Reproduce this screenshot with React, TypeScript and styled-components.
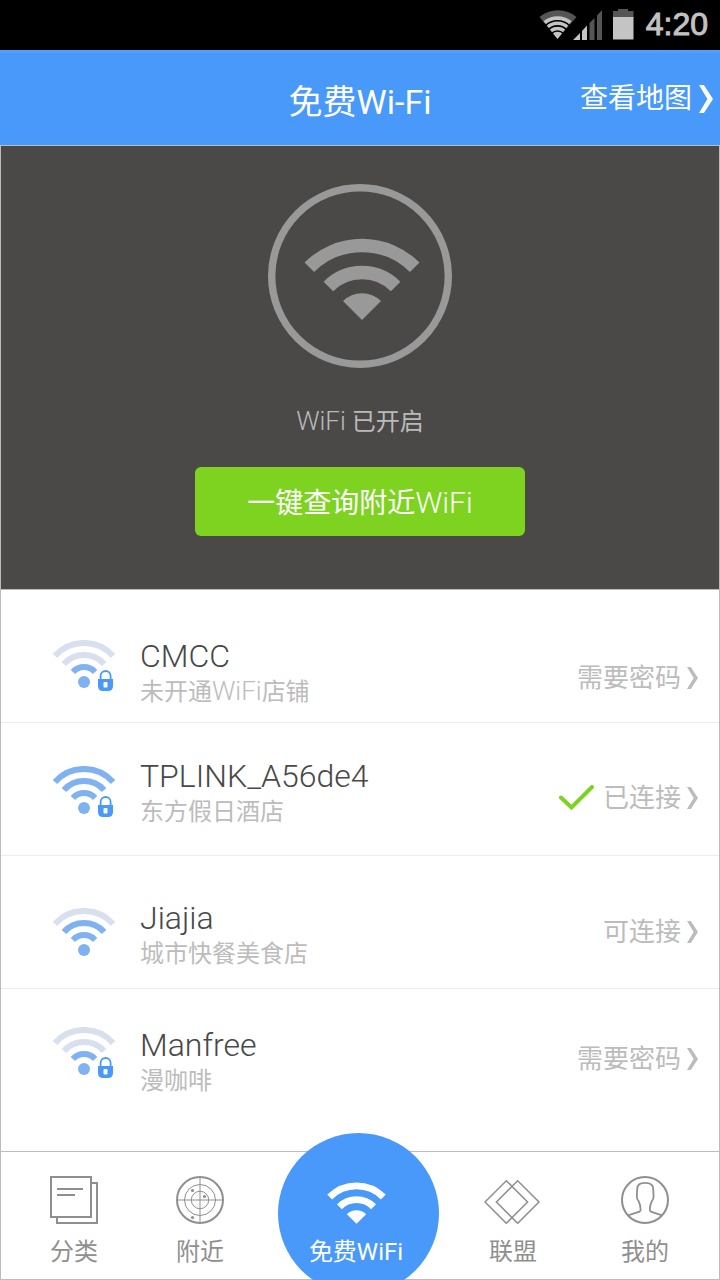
import React from 'react';
import styled, { createGlobalStyle } from 'styled-components';

const Global = createGlobalStyle`
  *, *::before, *::after { box-sizing: border-box; }
  body {
    margin: 0;
    background: #fff;
    font-family: Roboto, "Noto Sans CJK SC", sans-serif;
    font-weight: 400;
  }
  a { color: inherit; text-decoration: none; }
  h1, h2, p, ul { margin: 0; padding: 0; font-weight: inherit; }
  svg { display: block; flex: none; }
`;

const blue = '#4899f9';
const line = '#bcbcbc';

const Page = styled.div`
  display: flex;
  flex-direction: column;
  min-height: 100vh;
`;

const StatusBar = styled.div`
  display: flex;
  align-items: center;
  justify-content: flex-end;
  height: 50px;
  padding: 0 12px 2px 0;
  background: #000;
`;

const Clock = styled.time`
  margin-left: 12px;
  color: #c2c2c2;
  font: 400 32px/46px "Liberation Sans", sans-serif;
  -webkit-text-stroke: 1px #c2c2c2;
`;

const Header = styled.header`
  display: grid;
  grid-template-columns: 1fr auto 1fr;
  align-items: center;
  height: 95px;
  padding: 0 7px;
  border-top: 3px solid #559ffa;
  background: ${blue};
  color: #fff;
`;

const Title = styled.h1`
  grid-column: 2;
  padding-top: 6px;
  font-size: 34px;
  line-height: 48px;
`;

const MapLink = styled.a`
  display: flex;
  align-items: center;
  justify-self: end;
  gap: 7px;
  font-size: 28px;
  line-height: 40px;
`;

const Body = styled.main`
  display: flex;
  flex: 1;
  flex-direction: column;
  border: 1px solid ${line};
`;

const Hero = styled.section`
  display: flex;
  flex-direction: column;
  align-items: center;
  padding: 38px 0 53px;
  border-bottom: 1px solid ${line};
  background: #4a4947;
`;

const HeroState = styled.p`
  margin: 38px 0 28px;
  color: #bababa;
  font-size: 24px;
  line-height: 33px;
`;

const Latin = styled.span<{ $size: number }>`
  font-weight: 300;
  font-size: ${(p) => p.$size}px;
  line-height: 1;
`;

const ScanButton = styled.button`
  width: 330px;
  height: 69px;
  padding: 4px 0 0;
  border: 0;
  border-radius: 6px;
  background: #7ed321;
  color: #fff;
  font: inherit;
  font-size: 28px;
  line-height: 40px;
`;

const List = styled.ul`
  flex: 1;
  list-style: none;
`;

const Row = styled.li<{ $top: number }>`
  height: 133px;
  border-bottom: 1px solid #ececec;
  & > a {
    display: flex;
    align-items: flex-start;
    padding: ${(p) => p.$top}px 21px 0 51px;
  }
  &:last-child {
    height: 161px;
    border-bottom: 0;
  }
`;

const Signal = styled.div<{ $drop: number }>`
  padding-top: ${(p) => p.$drop}px;
`;

const Names = styled.div`
  flex: 1;
  min-width: 0;
  margin-left: 24px;
`;

const Ssid = styled.h2`
  color: #484848;
  font-weight: 300;
  font-size: 32px;
  line-height: 36px;
`;

const Place = styled.p`
  color: #bcbcbc;
  font-size: 24px;
  line-height: 36px;
`;

const State = styled.div<{ $drop: number }>`
  display: flex;
  align-items: center;
  gap: 6px;
  padding-top: ${(p) => p.$drop}px;
  color: #bcbcbc;
  font-size: 26px;
  line-height: 28px;
`;

const Tabs = styled.nav`
  display: grid;
  grid-template-columns: 126fr 126fr 190fr 120fr 144fr;
  height: 128px;
  padding: 0 2px 0 10px;
  border-top: 1px solid ${line};
`;

const Tab = styled.a`
  display: flex;
  flex-direction: column;
  align-items: center;
  gap: 12px;
  padding-top: 24px;
  color: #8f8f8f;
  font-size: 24px;
  line-height: 32px;
`;

const MainTab = styled(Tab)`
  position: relative;
  isolation: isolate;
  justify-self: center;
  width: 161px;
  height: 147px;
  margin-top: -19px;
  padding: 49px 4px 0 0;
  overflow: hidden;
  color: #fff;
  &::before {
    content: "";
    position: absolute;
    top: 0;
    left: 0;
    z-index: -1;
    width: 161px;
    height: 161px;
    border-radius: 50%;
    background: ${blue};
  }
`;

const Chevron = ({ w, h }: { w: number; h: number }) => (
  <svg width={w} height={h} viewBox="0 0 12 24" preserveAspectRatio="none" fill="currentColor" aria-hidden="true">
    <path d="M0 0H4.2L12 12L4.2 24H0L7.2 12Z" />
  </svg>
);

const WifiFan = ({ width, height }: { width: number; height: number }) => (
  <svg width={width} height={height} viewBox="-58 -82 116 82" aria-hidden="true">
    <g fill="none" stroke="currentColor" strokeWidth="13.5">
      <path d="M-52.7 -52.7A74.5 74.5 0 0 1 52.7 -52.7" />
      <path d="M-33.6 -33.6A47.5 47.5 0 0 1 33.6 -33.6" />
    </g>
    <path fill="currentColor" d="M0 0L-19 -19A27 27 0 0 1 19 -19Z" />
  </svg>
);

const WifiLevel = ({ level, locked }: { level: number; locked: boolean }) => {
  const tone = (n: number) => (level >= n ? '#80b2f2' : '#d8e0ef');
  return (
    <svg width="64" height="52" viewBox="-32 -42 64 52" aria-hidden="true">
      <g fill="none" strokeWidth="6">
        <path stroke={tone(3)} d="M-29 -26.1A39 39 0 0 1 29 -26.1" />
        <path stroke={tone(2)} d="M-20.1 -18.1A27 27 0 0 1 20.1 -18.1" />
        <path stroke={tone(1)} d="M-11.1 -10A15 15 0 0 1 11.1 -10" />
      </g>
      <circle r="6" fill="#80b2f2" />
      {locked && (
        <>
          <path d="M16.6 -2V-6A5 5 0 0 1 26.6 -6V-2" fill="none" stroke={blue} strokeWidth="1.8" />
          <path
            fill={blue}
            fillRule="evenodd"
            d="M14 -3H29V4Q29 9 24 9H19Q14 9 14 4ZM20.5 0Q19.5 0 19.5 1V4.5Q19.5 5.5 20.5 5.5H22.5Q23.5 5.5 23.5 4.5V1Q23.5 0 22.5 0Z"
          />
        </>
      )}
    </svg>
  );
};

const StatusIcons = () => (
  <svg width="95" height="32" viewBox="539 8 95 32" role="img" aria-label="信号与电量">
    <path fill="#555" d="M557.5 39L539.5 17A29 29 0 0 1 576.5 17Z" />
    <path fill="#c4c4c4" d="M557.5 39L543.5 21A23 23 0 0 1 571.5 21Z" />
    <g fill="none" stroke="#000" strokeWidth="1.7">
      <path d="M545.5 25.5A17.5 17.5 0 0 1 569.5 25.5" />
      <path d="M548.5 29.5A13 13 0 0 1 566.5 29.5" />
      <path d="M551.5 33.5A8.5 8.5 0 0 1 563.5 33.5" />
    </g>
    <path fill="#c4c4c4" d="M573 40L580 33V40ZM582 31L587 25.5V40H582Z" />
    <path fill="#555" d="M589.5 23L594.5 18V40H589.5ZM597 15.5L602 10V40H597Z" />
    <path fill="#555" d="M613 11H618V9H628V11H633.5V18H613Z" />
    <path fill="#c4c4c4" d="M613 17H633.5V39.5H613Z" />
  </svg>
);

const CheckMark = styled.svg`
  margin-right: 3px;
  fill: none;
  stroke: #7ed321;
  stroke-width: 4;
  stroke-linecap: round;
`;

const Check = () => (
  <CheckMark width="35" height="26" viewBox="0 0 35 26" aria-hidden="true">
    <path d="M2 12.5L12.5 22.5L33 2" />
  </CheckMark>
);

const Stroke = styled.svg`
  fill: none;
  stroke: #8f8f8f;
  stroke-width: 2;
`;

const Notes = () => (
  <Stroke width="48" height="48" viewBox="0 0 48 48" aria-hidden="true">
    <path d="M1 1H41V41H1ZM41 7H47V47H7V41M7 13H33M7 19H25" />
  </Stroke>
);

const Radar = () => (
  <Stroke width="48" height="48" viewBox="0 0 48 48" aria-hidden="true">
    <circle cx="24" cy="24" r="23" />
    <g strokeWidth="1">
      <circle cx="24" cy="24" r="15.5" />
      <circle cx="24" cy="24" r="8.7" />
      <path d="M24 1V47M1 24H47" />
    </g>
    <g fill="#8f8f8f" stroke="none">
      <circle cx="16.5" cy="14.5" r="1.6" />
      <circle cx="28.5" cy="20.5" r="1.6" />
      <circle cx="16.5" cy="41.5" r="1.6" />
    </g>
  </Stroke>
);

const Diamonds = () => (
  <Stroke width="58" height="48" viewBox="0 0 58 48" aria-hidden="true">
    <g strokeWidth="1.5">
      <path d="M1 26L22.3 4.7L43.6 26L22.3 47.3Z" />
      <path d="M12.4 26L33.7 4.7L55 26L33.7 47.3Z" />
    </g>
  </Stroke>
);

const Person = () => (
  <Stroke width="48" height="48" viewBox="0 0 48 48" aria-hidden="true">
    <circle cx="24" cy="24" r="23" />
    <path
      strokeWidth="1.8"
      d="M7 39.3L18.5 35.7Q19.6 35 19.6 33.5C19.6 29 18.8 27.5 17.5 24.8Q15.8 23.3 15.8 20.3L16.2 13C16.2 8.8 19 6.8 24 6.8S32.2 8.8 32.2 13L32.6 20.3Q32.6 23.3 31 24.8C29.6 27.5 28.8 29 28.8 33.5Q28.8 35 30 35.7L41 39.3"
    />
  </Stroke>
);

type Network = {
  ssid: string;
  place: React.ReactNode;
  state: string;
  level: number;
  locked: boolean;
  connected?: boolean;
  top: number;
  iconDrop: number;
  stateDrop: number;
};

const networks: Network[] = [
  {
    ssid: 'CMCC',
    place: (
      <>
        未开通<Latin $size={26}>WiFi</Latin>店铺
      </>
    ),
    state: '需要密码',
    level: 1,
    locked: true,
    top: 48,
    iconDrop: 2,
    stateDrop: 26,
  },
  { ssid: 'TPLINK_A56de4', place: '东方假日酒店', state: '已连接', level: 3, locked: true, connected: true, top: 35, iconDrop: 8, stateDrop: 26 },
  { ssid: 'Jiajia', place: '城市快餐美食店', state: '可连接', level: 2, locked: false, top: 44, iconDrop: 8, stateDrop: 18 },
  { ssid: 'Manfree', place: '漫咖啡', state: '需要密码', level: 1, locked: true, top: 38, iconDrop: 0, stateDrop: 18 },
];

export default function App() {
  return (
    <Page>
      <Global />
      <StatusBar>
        <StatusIcons />
        <Clock>4:20</Clock>
      </StatusBar>
      <Header>
        <Title>免费Wi-Fi</Title>
        <MapLink href="#map">
          查看地图
          <Chevron w={14} h={28} />
        </MapLink>
      </Header>
      <Body>
        <Hero>
          <svg width="184" height="184" viewBox="0 0 184 184" color="#999" aria-hidden="true">
            <circle cx="92" cy="92" r="88.3" fill="none" stroke="#999" strokeWidth="7.4" />
            <svg x="36" y="54" width="116" height="82">
              <WifiFan width={116} height={82} />
            </svg>
          </svg>
          <HeroState>
            <Latin $size={26}>WiFi</Latin> 已开启
          </HeroState>
          <ScanButton type="button">
            一键查询附近<Latin $size={30}>WiFi</Latin>
          </ScanButton>
        </Hero>
        <List>
          {networks.map((n) => (
            <Row key={n.ssid} $top={n.top}>
              <a href="#network">
                <Signal $drop={n.iconDrop}>
                  <WifiLevel level={n.level} locked={n.locked} />
                </Signal>
                <Names>
                  <Ssid>{n.ssid}</Ssid>
                  <Place>{n.place}</Place>
                </Names>
                <State $drop={n.stateDrop}>
                  {n.connected && <Check />}
                  {n.state}
                  <Chevron w={11} h={22} />
                </State>
              </a>
            </Row>
          ))}
        </List>
        <Tabs>
          <Tab href="#category">
            <Notes />
            分类
          </Tab>
          <Tab href="#nearby">
            <Radar />
            附近
          </Tab>
          <MainTab href="#wifi" aria-current="page">
            <WifiFan width={59} height={42} />
            免费WiFi
          </MainTab>
          <Tab href="#union">
            <Diamonds />
            联盟
          </Tab>
          <Tab href="#mine">
            <Person />
            我的
          </Tab>
        </Tabs>
      </Body>
    </Page>
  );
}
